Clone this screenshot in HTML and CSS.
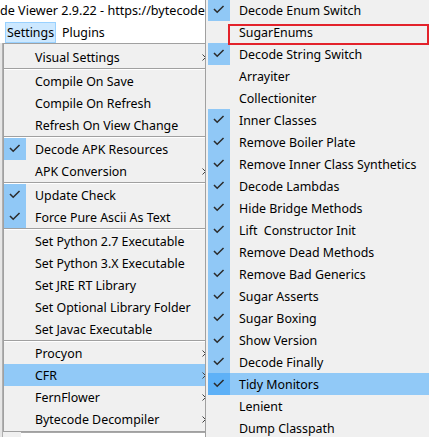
FILE: index.html
```html
<!DOCTYPE html>
<html>
<head>
<meta charset="utf-8">
<link rel="stylesheet" href="styles.css">
</head>
<body>
<div class="app">
  <div class="titlebar">de Viewer 2.9.22 - https://bytecode</div>
  <div class="menubar">
    <div class="mb-item active">Settings</div>
    <div class="mb-item">Plugins</div>
  </div>
  <div class="workspace">
    <div class="side-strip"></div>
    <div class="main-area"><div class="bottom-bar"></div></div>
  </div>

  <div class="menu settings-menu">
    <div class="mi sub"><span class="chk"></span><span class="lbl">Visual Settings</span><svg class="arrow" viewBox="0 0 4 7"><polyline points="0.5,0.5 3.5,3.5 0.5,6.5"/></svg></div>
    <div class="sep"></div>
    <div class="mi"><span class="chk"></span><span class="lbl">Compile On Save</span></div>
    <div class="mi"><span class="chk"></span><span class="lbl">Compile On Refresh</span></div>
    <div class="mi"><span class="chk"></span><span class="lbl">Refresh On View Change</span></div>
    <div class="sep"></div>
    <div class="mi checked"><span class="chk"><svg viewBox="0 0 22 22"><polyline points="6.5,10.5 9.2,13.3 15,7.5"/></svg></span><span class="lbl">Decode APK Resources</span></div>
    <div class="mi sub"><span class="chk"></span><span class="lbl">APK Conversion</span><svg class="arrow" viewBox="0 0 4 7"><polyline points="0.5,0.5 3.5,3.5 0.5,6.5"/></svg></div>
    <div class="sep"></div>
    <div class="mi checked"><span class="chk"><svg viewBox="0 0 22 22"><polyline points="6.5,10.5 9.2,13.3 15,7.5"/></svg></span><span class="lbl">Update Check</span></div>
    <div class="mi checked"><span class="chk"><svg viewBox="0 0 22 22"><polyline points="6.5,10.5 9.2,13.3 15,7.5"/></svg></span><span class="lbl">Force Pure Ascii As Text</span></div>
    <div class="sep"></div>
    <div class="mi"><span class="chk"></span><span class="lbl">Set Python 2.7 Executable</span></div>
    <div class="mi"><span class="chk"></span><span class="lbl">Set Python 3.X Executable</span></div>
    <div class="mi"><span class="chk"></span><span class="lbl">Set JRE RT Library</span></div>
    <div class="mi"><span class="chk"></span><span class="lbl">Set Optional Library Folder</span></div>
    <div class="mi"><span class="chk"></span><span class="lbl">Set Javac Executable</span></div>
    <div class="sep"></div>
    <div class="mi sub"><span class="chk"></span><span class="lbl">Procyon</span><svg class="arrow" viewBox="0 0 4 7"><polyline points="0.5,0.5 3.5,3.5 0.5,6.5"/></svg></div>
    <div class="mi sub hover"><span class="chk"></span><span class="lbl">CFR</span><svg class="arrow" viewBox="0 0 4 7"><polyline points="0.5,0.5 3.5,3.5 0.5,6.5"/></svg></div>
    <div class="mi sub"><span class="chk"></span><span class="lbl">FernFlower</span><svg class="arrow" viewBox="0 0 4 7"><polyline points="0.5,0.5 3.5,3.5 0.5,6.5"/></svg></div>
    <div class="mi sub"><span class="chk"></span><span class="lbl">Bytecode Decompiler</span><svg class="arrow" viewBox="0 0 4 7"><polyline points="0.5,0.5 3.5,3.5 0.5,6.5"/></svg></div>
  </div>

  <div class="menu cfr-menu">
    <div class="mi checked"><span class="chk"><svg viewBox="0 0 22 22"><polyline points="6.5,10.5 9.2,13.3 15,7.5"/></svg></span><span class="lbl">Decode Enum Switch</span></div>
    <div class="mi"><span class="chk"></span><span class="lbl">SugarEnums</span></div>
    <div class="mi checked"><span class="chk"><svg viewBox="0 0 22 22"><polyline points="6.5,10.5 9.2,13.3 15,7.5"/></svg></span><span class="lbl">Decode String Switch</span></div>
    <div class="mi"><span class="chk"></span><span class="lbl">Arrayiter</span></div>
    <div class="mi"><span class="chk"></span><span class="lbl">Collectioniter</span></div>
    <div class="mi checked"><span class="chk"><svg viewBox="0 0 22 22"><polyline points="6.5,10.5 9.2,13.3 15,7.5"/></svg></span><span class="lbl">Inner Classes</span></div>
    <div class="mi checked"><span class="chk"><svg viewBox="0 0 22 22"><polyline points="6.5,10.5 9.2,13.3 15,7.5"/></svg></span><span class="lbl">Remove Boiler Plate</span></div>
    <div class="mi checked"><span class="chk"><svg viewBox="0 0 22 22"><polyline points="6.5,10.5 9.2,13.3 15,7.5"/></svg></span><span class="lbl">Remove Inner Class Synthetics</span></div>
    <div class="mi checked"><span class="chk"><svg viewBox="0 0 22 22"><polyline points="6.5,10.5 9.2,13.3 15,7.5"/></svg></span><span class="lbl">Decode Lambdas</span></div>
    <div class="mi checked"><span class="chk"><svg viewBox="0 0 22 22"><polyline points="6.5,10.5 9.2,13.3 15,7.5"/></svg></span><span class="lbl">Hide Bridge Methods</span></div>
    <div class="mi checked"><span class="chk"><svg viewBox="0 0 22 22"><polyline points="6.5,10.5 9.2,13.3 15,7.5"/></svg></span><span class="lbl">Lift&nbsp; Constructor Init</span></div>
    <div class="mi checked"><span class="chk"><svg viewBox="0 0 22 22"><polyline points="6.5,10.5 9.2,13.3 15,7.5"/></svg></span><span class="lbl">Remove Dead Methods</span></div>
    <div class="mi checked"><span class="chk"><svg viewBox="0 0 22 22"><polyline points="6.5,10.5 9.2,13.3 15,7.5"/></svg></span><span class="lbl">Remove Bad Generics</span></div>
    <div class="mi checked"><span class="chk"><svg viewBox="0 0 22 22"><polyline points="6.5,10.5 9.2,13.3 15,7.5"/></svg></span><span class="lbl">Sugar Asserts</span></div>
    <div class="mi checked"><span class="chk"><svg viewBox="0 0 22 22"><polyline points="6.5,10.5 9.2,13.3 15,7.5"/></svg></span><span class="lbl">Sugar Boxing</span></div>
    <div class="mi checked"><span class="chk"><svg viewBox="0 0 22 22"><polyline points="6.5,10.5 9.2,13.3 15,7.5"/></svg></span><span class="lbl">Show Version</span></div>
    <div class="mi checked"><span class="chk"><svg viewBox="0 0 22 22"><polyline points="6.5,10.5 9.2,13.3 15,7.5"/></svg></span><span class="lbl">Decode Finally</span></div>
    <div class="mi checked hover"><span class="chk"><svg viewBox="0 0 22 22"><polyline points="6.5,10.5 9.2,13.3 15,7.5"/></svg></span><span class="lbl">Tidy Monitors</span></div>
    <div class="mi"><span class="chk"></span><span class="lbl">Lenient</span></div>
    <div class="mi"><span class="chk"></span><span class="lbl">Dump Classpath</span></div>
  </div>

  <div class="annotation"></div>
</div>
</body>
</html>
```

FILE: styles.css
```css
* { box-sizing: border-box; margin: 0; padding: 0; }
html, body { width: 429px; height: 437px; overflow: hidden; }
body {
  background: #ffffff;
  font-family: "Noto Sans", "Segoe UI", sans-serif;
  font-size: 12.4px;
  color: #000000;
}
.app {
  position: relative;
  width: 429px;
  height: 437px;
  display: flex;
  flex-direction: column;
}
.titlebar {
  height: 22px;
  display: flex;
  align-items: center;
  white-space: nowrap;
  padding-bottom: 2px;
  font-size: 12.6px;
}
.menubar {
  height: 21px;
  display: flex;
  align-items: stretch;
  padding-left: 5px;
  gap: 5px;
}
.mb-item {
  display: flex;
  align-items: center;
  justify-content: center;
  padding: 0 1px;
}
.mb-item.active {
  width: 51px;
  background: #cce8ff;
  border: 1px solid #99d1ff;
}
.workspace {
  flex: 1;
  display: flex;
  background: #f0f0f0;
}
.side-strip {
  width: 3px;
  background: #e6e6e6;
  border-right: 1px solid #b0b0b0;
}
.main-area {
  flex: 1;
  display: flex;
  flex-direction: column;
  justify-content: flex-end;
}
.bottom-bar {
  height: 5px;
  margin-left: 18px;
  border-top: 1px solid #a8a8a8;
  background: #ffffff;
}

/* popup menus */
.menu {
  position: absolute;
  background: #f0f0f0;
  border: 1px solid #a0a0a0;
  display: flex;
  flex-direction: column;
  overflow: hidden;
}
.settings-menu {
  left: 3px;
  top: 43px;
  width: 204px;
  height: 389px;
  padding: 2px 0 1px 0;
}
.cfr-menu {
  left: 205px;
  top: -3px;
  width: 240px;
  height: 450px;
  padding: 2px 0 0 2px;
  border-top: none;
}
.mi {
  position: relative;
  height: 22px;
  flex: 0 0 22px;
  display: flex;
  align-items: center;
  white-space: nowrap;
}
.chk {
  width: 22px;
  height: 22px;
  flex: 0 0 22px;
  margin-right: 9px;
  display: flex;
}
.chk svg {
  width: 22px;
  height: 22px;
}
.chk polyline {
  fill: none;
  stroke: #2b2b2b;
  stroke-width: 1.5;
  stroke-linecap: square;
}
.mi.checked .chk { background: #90c8f6; }
.mi.hover { background: #91c9f7; }
.mi.checked.hover .chk { background: #5eb1f7; }
.arrow {
  position: absolute;
  right: 0px;
  top: 8px;
  width: 4px;
  height: 7px;
}
.arrow polyline {
  fill: none;
  stroke: #404040;
  stroke-width: 1;
}
.sep {
  flex: 0 0 2px;
  height: 2px;
  border-top: 1px solid #a0a0a0;
  background: #ffffff;
}
.annotation {
  position: absolute;
  left: 228px;
  top: 24px;
  width: 201px;
  height: 21px;
  border: 2px solid #e3222b;
}
```
